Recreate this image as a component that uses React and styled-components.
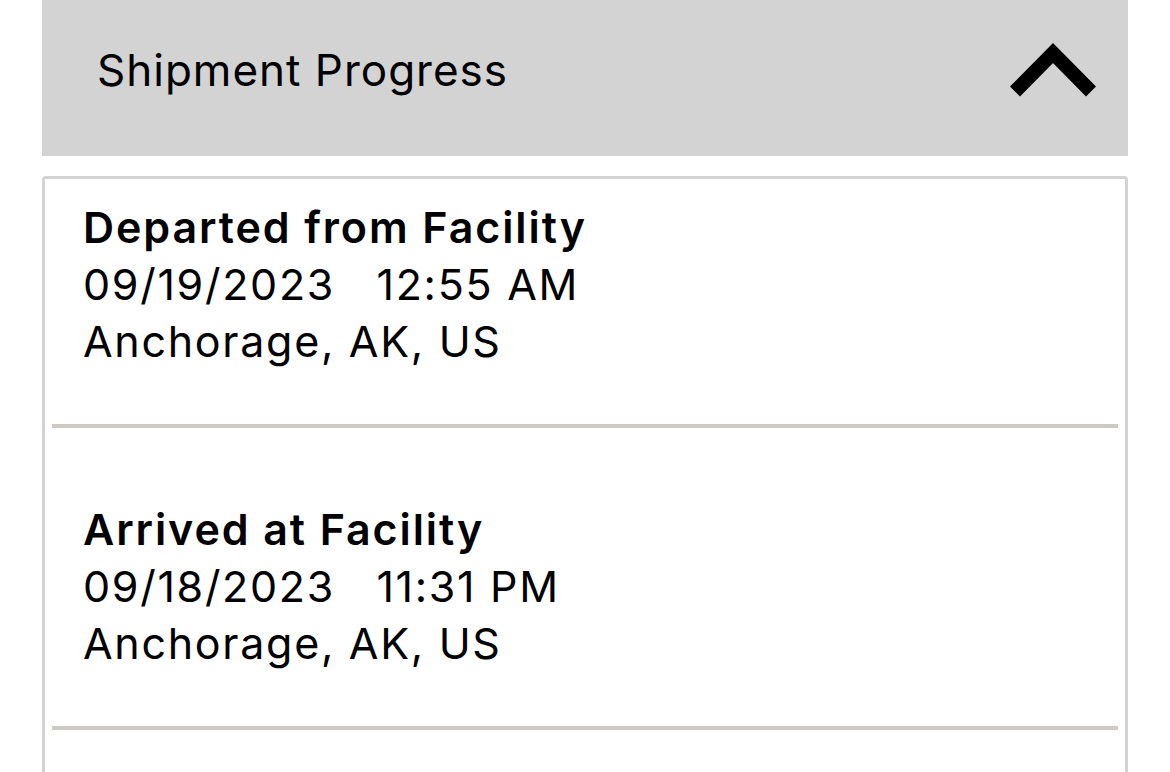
import React from 'react';
import styled, { createGlobalStyle } from 'styled-components';

const GlobalStyle = createGlobalStyle`
    html, body {
        margin: 0;
        padding: 0;
        background: #fff;
    }
    body {
        font-family: Inter, "Liberation Sans", Arial, sans-serif;
        color: #000;
        overflow: hidden;
    }
`;

const Page = styled.div`
    width: 1170px;
    height: 772px;
    padding: 0 42px;
    box-sizing: border-box;
    overflow: hidden;
`;

const Header = styled.div`
    height: 156px;
    background: #d3d3d3;
    display: flex;
    align-items: center;
    justify-content: space-between;
    padding: 0 27px 16px 55px;
    box-sizing: border-box;
`;

const Title = styled.h2`
    margin: 0;
    font-size: 44px;
    font-weight: 400;
    letter-spacing: 1px;
`;

const ToggleButton = styled.button`
    border: none;
    background: none;
    padding: 0;
    display: flex;
    cursor: pointer;
`;

const Card = styled.div`
    margin-top: 20px;
    border: 3px solid #d3d3d3;
    border-bottom: none;
    border-radius: 4px 4px 0 0;
    padding: 0 7px;
    height: 640px;
`;

const Event = styled.div`
    padding: ${props => props.$top}px 31px ${props => props.$bottom}px;
    border-bottom: 4px solid #cdc9c5;
`;

const Line = styled.div`
    font-size: 43px;
    line-height: 57px;
    font-weight: ${props => (props.$bold ? 600 : 400)};
    letter-spacing: ${props => (props.$bold ? 1.9 : 1.7)}px;
    white-space: pre;
`;

const Chevron = () => (
    <svg width="96" height="64" viewBox="0 0 96 64">
        <polyline
            points="10,53.5 48,15 86,53.5"
            fill="none"
            stroke="#000"
            strokeWidth="14"
            strokeLinejoin="miter"
        />
    </svg>
);

const events = [
    { status: 'Departed from Facility', date: '09/19/2023', time: '12:55 AM', place: 'Anchorage, AK, US', top: 20, bottom: 54 },
    { status: 'Arrived at Facility', date: '09/18/2023', time: '11:31 PM', place: 'Anchorage, AK, US', top: 73, bottom: 54 },
];

const App = () => (
    <>
        <GlobalStyle />
        <Page>
            <Header>
                <Title>Shipment Progress</Title>
                <ToggleButton aria-label="Collapse">
                    <Chevron />
                </ToggleButton>
            </Header>
            <Card>
                {events.map(ev => (
                    <Event key={ev.status + ev.time} $top={ev.top} $bottom={ev.bottom}>
                        <Line $bold>{ev.status}</Line>
                        <Line>{`${ev.date}   ${ev.time}`}</Line>
                        <Line>{ev.place}</Line>
                    </Event>
                ))}
            </Card>
        </Page>
    </>
);

export default App;
